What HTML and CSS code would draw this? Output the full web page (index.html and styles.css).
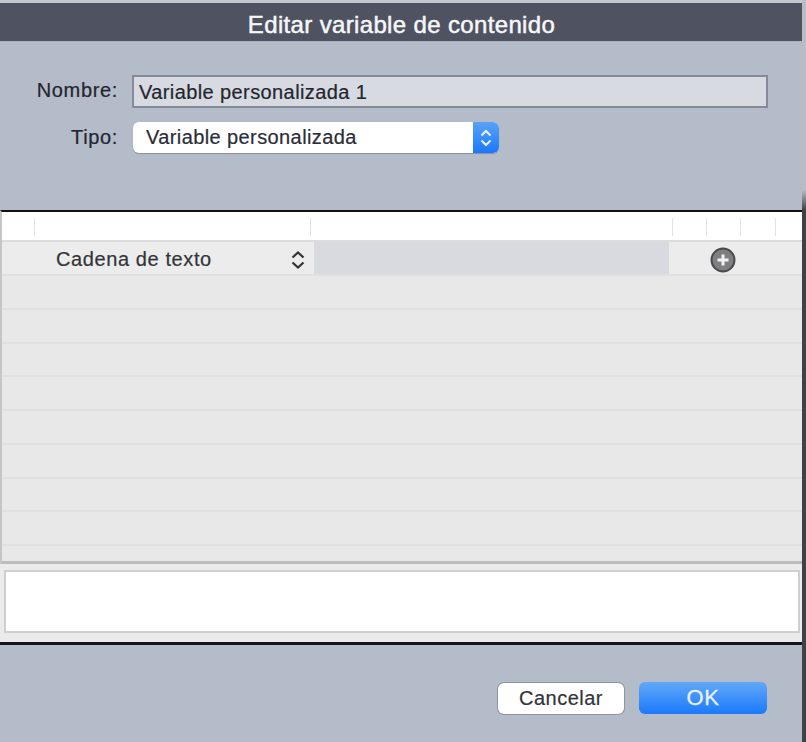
FILE: index.html
```html
<!DOCTYPE html>
<html lang="es">
<head>
<meta charset="utf-8">
<title>Editar variable de contenido</title>
<link rel="stylesheet" href="styles.css">
</head>
<body>
<div class="window">
  <header class="titlebar">Editar variable de contenido</header>
  <section class="form">
    <div class="form-row name-row">
      <label class="label">Nombre:</label>
      <div class="name-field">Variable personalizada 1</div>
    </div>
    <div class="form-row type-row">
      <label class="label">Tipo:</label>
      <div class="select">
        <span class="select-text">Variable personalizada</span>
        <span class="select-btn">
          <svg width="14" height="20" viewBox="0 0 14 20"><path d="M2.5 7.5 7 3l4.5 4.5M2.5 12.5 7 17l4.5-4.5" fill="none" stroke="#e8f1ff" stroke-width="2"/></svg>
        </span>
      </div>
    </div>
  </section>
  <section class="table">
    <div class="thead">
      <span class="tick t1"></span><span class="tick t2"></span><span class="tick t3"></span><span class="tick t4"></span><span class="tick t5"></span><span class="tick t6"></span>
    </div>
    <div class="row first">
      <div class="type-cell">
        <span>Cadena de texto</span>
        <svg width="16" height="22" viewBox="0 0 16 22"><path d="M2.5 8.5 8 3.5l5.5 5M2.5 13.5 8 18.5l5.5-5" fill="none" stroke="#333" stroke-width="2.2"/></svg>
      </div>
      <div class="value-cell"></div>
      <div class="add-cell">
        <svg width="26" height="26" viewBox="0 0 26 26"><circle cx="13" cy="13" r="11.5" fill="#7f7f81" stroke="#4b4b4d" stroke-width="2"/><path d="M13 7.5v11M7.5 13h11" stroke="#f2f2f2" stroke-width="3"/></svg>
      </div>
    </div>
    <div class="row"></div><div class="row"></div><div class="row"></div><div class="row"></div>
    <div class="row"></div><div class="row"></div><div class="row"></div><div class="row"></div>
    <div class="row last"></div>
  </section>
  <section class="notes-wrap"><div class="notes"></div></section>
  <footer class="footer">
    <button class="btn cancel">Cancelar</button>
    <button class="btn ok">OK</button>
  </footer>
</div>
</body>
</html>
```
FILE: styles.css
```css
* { box-sizing: border-box; }
html, body { margin: 0; height: 100%; }
body {
  width: 806px; height: 742px; overflow: hidden;
  background: linear-gradient(#b9bcc4 0 190px, #3f4148 210px);
  font-family: "Liberation Sans", Arial, sans-serif;
}
.window {
  width: 802px; height: 742px;
  display: flex; flex-direction: column;
  padding-top: 3px;
  background: #c4c8d0;
}
.titlebar {
  height: 38px; flex: none;
  background: #4e5261;
  color: #f6f7f9;
  font-size: 24px;
  letter-spacing: 0.35px;
  -webkit-text-stroke: 0.5px #f6f7f9;
  text-align: center;
  line-height: 43px;
  padding-left: 1px;
}
.form {
  height: 169px; flex: none;
  background: #b4bbc9;
  border-top: 1px solid #a9b0be;
  color: #23262e;
  font-size: 20px;
  letter-spacing: 0.4px;
  -webkit-text-stroke: 0.2px #23262e;
  padding-top: 33px;
}
.form-row { display: flex; align-items: center; }
.label { width: 118px; text-align: right; flex: none; letter-spacing: 0.65px; }
.name-row .label { margin-top: -2px; }
.name-field {
  margin-left: 14px;
  width: 636px; height: 33px;
  background: #d7dae1;
  border: 2px solid #848a98;
  padding-left: 5px;
  line-height: 31px;
}
.type-row { margin-top: 14px; }
.select {
  margin-left: 15px;
  width: 366px; height: 31px;
  display: flex; justify-content: space-between;
  background: #fff;
  border-radius: 6px;
  box-shadow: 0 1px 1px #8a909d;
  overflow: hidden;
}
.select-text { padding-left: 13px; line-height: 31px; color: #2b2e38; }
.select-btn {
  width: 26px;
  background: linear-gradient(#5ba2f6, #1a78fa);
  display: flex; align-items: center; justify-content: center;
}
.table {
  height: 354px; flex: none;
  background: #e8e8e8;
  border-top: 2px solid #111;
  border-left: 2px solid #c6c6c6;
  display: flex; flex-direction: column;
}
.thead {
  height: 30px; flex: none;
  background: #fff;
  border-bottom: 2px solid #dcdcdc;
  display: flex;
  padding-top: 6px;
}
.tick { width: 1px; height: 18px; background: #e2e2e2; flex: none; }
.t1 { margin-left: 32px; }
.t2 { margin-left: 275px; }
.t3 { margin-left: 361px; }
.t4 { margin-left: 33px; }
.t5 { margin-left: 33px; }
.t6 { margin-left: 34px; }
.row {
  height: 33.75px; flex: none;
  border-bottom: 2px solid #e0e0e0;
  display: flex;
}
.row.first { height: 34px; background: #ececec; }
.row.last { flex: 1; height: auto; border-bottom: 3px solid #bdbdbd; }
.type-cell {
  width: 312px; flex: none;
  display: flex; align-items: center; justify-content: space-between;
  padding: 3px 8px 0 54px;
  font-size: 20px; letter-spacing: 0.6px; color: #33343a;
  -webkit-text-stroke: 0.2px #33343a;
}
.value-cell { width: 355px; flex: none; background: #d8dadf; }
.add-cell {
  width: 107px; flex: none; padding-top: 3px;
  display: flex; align-items: center; justify-content: center;
}
.notes-wrap {
  height: 78px; flex: none;
  background: #ebebeb;
  padding: 6px 2px 0 4px;
}
.notes {
  height: 63px;
  background: #fff;
  border: 2px solid #cfcfcf;
}
.footer {
  flex: 1;
  background: #b4bbc9;
  border-top: 3px solid #15161a;
  display: flex; justify-content: flex-end; gap: 15px;
  padding: 37px 35px 0 0;
}
.btn {
  width: 128px; height: 31px;
  border: 0; border-radius: 6px;
  font: 20px "Liberation Sans", Arial, sans-serif;
  letter-spacing: 0.5px;
  padding: 0;
}
.cancel { background: #fff; color: #33343a; box-shadow: 0 0 0 1px #8e94a1; width: 126px; margin-top: 1px; -webkit-text-stroke: 0.2px #33343a; }
.ok { background: linear-gradient(#62a8f7, #1b79fb); color: #e8f2ff; height: 32px; font-size: 22px; -webkit-text-stroke: 0.3px #e8f2ff; }
```
